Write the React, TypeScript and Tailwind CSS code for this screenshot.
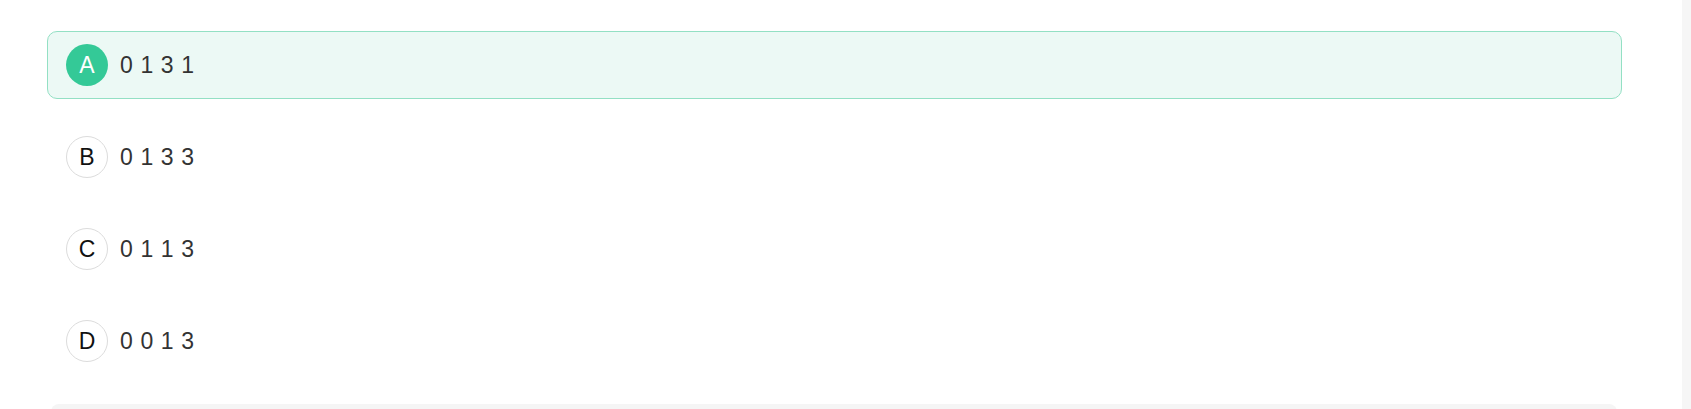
const options = [
  { key: "A", text: "0 1 3 1", selected: true },
  { key: "B", text: "0 1 3 3", selected: false },
  { key: "C", text: "0 1 1 3", selected: false },
  { key: "D", text: "0 0 1 3", selected: false },
];

const App = () => {
  return (
    <div className="flex h-[409px] w-[1691px] overflow-hidden bg-[#f6f6f6] font-['Liberation_Sans',Arial,sans-serif]">
      <div className="flex w-[1682px] flex-col bg-white">
        <div className="h-px w-full bg-[#e3f5ef]" />
        <div className="flex flex-col gap-6 pl-[47px] pr-[60px] pt-[31px]">
          {options.map((opt) => (
            <div
              key={opt.key}
              className={
                opt.selected
                  ? "flex h-[68px] items-center gap-3 rounded-[10px] border border-[#93e0c4] bg-[#ecf9f5] px-[18px]"
                  : "flex h-[68px] items-center gap-3 rounded-[10px] border border-transparent px-[18px]"
              }
            >
              <div
                className={
                  opt.selected
                    ? "flex h-[42px] w-[42px] shrink-0 items-center justify-center rounded-full bg-[#34c997] text-[23px] text-white"
                    : "flex h-[42px] w-[42px] shrink-0 items-center justify-center rounded-full border border-[#dcdcdc] bg-white text-[23px] text-[#111]"
                }
              >
                {opt.key}
              </div>
              <span className="text-[23px] tracking-[0.6px] text-[#333]">{opt.text}</span>
            </div>
          ))}
        </div>
        <div className="mt-[29px] ml-[51px] mr-[65px] h-[20px] shrink-0 rounded-t-[8px] bg-[#f5f5f5]" />
      </div>
    </div>
  );
};

export default App;
